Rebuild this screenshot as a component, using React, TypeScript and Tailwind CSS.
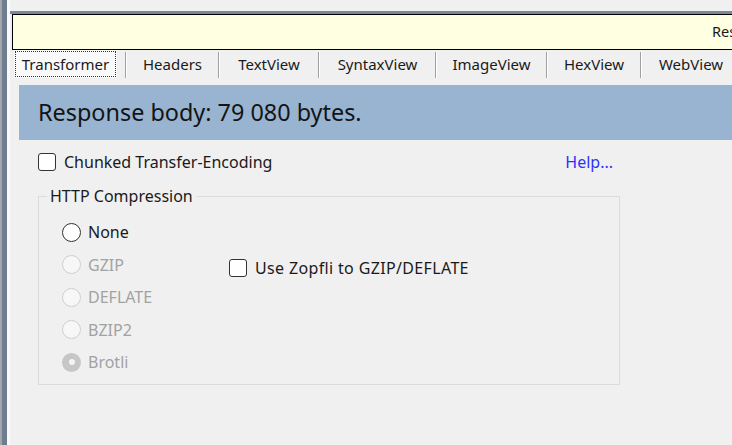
const TABS = [
  { label: 'Headers', width: 'w-[93px]' },
  { label: 'TextView', width: 'w-[100px]' },
  { label: 'SyntaxView', width: 'w-[117px]' },
  { label: 'ImageView', width: 'w-[111px]' },
  { label: 'HexView', width: 'w-[94px]' },
  { label: 'WebView', width: 'w-[100px]' },
]

const COMPRESSION = [
  { label: 'None', enabled: true, checked: false },
  { label: 'GZIP', enabled: false, checked: false },
  { label: 'DEFLATE', enabled: false, checked: false },
  { label: 'BZIP2', enabled: false, checked: false },
  { label: 'Brotli', enabled: false, checked: true },
]

export default function App() {
  return (
    <div className="flex h-[445px] w-[732px] overflow-hidden bg-[#f0f0f0] font-['Noto_Sans',sans-serif] text-[#1a1a1a]">
      <div className="flex w-[10px] shrink-0">
        <div className="w-[2px] bg-[#a3a7ab]" />
        <div className="w-[5px] bg-[#6e7e90]" />
        <div className="w-[3px] bg-[#fafafa]" />
      </div>

      <div className="flex min-w-0 flex-1 flex-col">
        <div className="h-[11px]" />
        <div className="h-[3px] bg-[#7b8897]" />
        <div className="ml-[2px] flex h-[36px] items-center overflow-hidden whitespace-nowrap border-y border-l border-black bg-[#ffffe1] pl-[699px] text-[14.5px]">
          Response body is encoded. Click to decode.
        </div>

        <Tabs />

        <div className="ml-[9px] mt-[7px] flex h-[55px] items-center bg-[#99b4d1] pl-[19px] text-[23.4px] text-[#141414]">
          Response body: 79 080 bytes.
        </div>

        <div className="ml-[9px] pl-[19px] text-[16px]">
          <div className="mt-[13px] flex h-[18px] w-[575px] items-center">
            <CheckBox />
            <span className="ml-[8px]">Chunked Transfer-Encoding</span>
            <a className="ml-auto text-[#2f2fff]">Help...</a>
          </div>

          <fieldset className="mt-[15px] h-[199px] w-[582px] border border-[#dcdcdc]">
            <legend className="ml-[8px] px-[3px] leading-[20px]">HTTP Compression</legend>
            <div className="flex">
              <div className="flex w-[190px] shrink-0 flex-col pl-[23px] pt-[10px]">
                {COMPRESSION.map((item) => (
                  <div key={item.label} className="flex h-[32.5px] items-center">
                    <Radio enabled={item.enabled} checked={item.checked} />
                    <span className={`ml-[7px] ${item.enabled ? '' : 'text-[#a2a2a2]'}`}>{item.label}</span>
                  </div>
                ))}
              </div>
              <div className="mt-[53px] flex h-[18px] items-center">
                <CheckBox />
                <span className="ml-[8px] tracking-[0.35px]">Use Zopfli to GZIP/DEFLATE</span>
              </div>
            </div>
          </fieldset>
        </div>
      </div>
    </div>
  )
}

function Tabs() {
  return (
    <div className="ml-[4px] flex h-[28px] items-stretch whitespace-nowrap text-[15px]">
      <div className="flex w-[103px] shrink-0 items-center justify-center bg-[#f9f9f9] p-[1px]">
        <div className="flex h-full w-full items-center justify-center border border-dotted border-[#333]">
          Transformer
        </div>
      </div>
      <div className="w-[8px] shrink-0" />
      {TABS.map((tab) => (
        <div key={tab.label} className={`flex ${tab.width} shrink-0 items-center justify-center`}>
          <span className="h-[26px] w-[2px] shrink-0 self-end border-l border-[#a0a0a0] border-r border-r-white" />
          <span className="flex-1 text-center">{tab.label}</span>
        </div>
      ))}
    </div>
  )
}

function CheckBox() {
  return <span className="inline-block h-[18px] w-[18px] shrink-0 rounded-[3px] border border-[#333] bg-white" />
}

function Radio({ enabled, checked }: { enabled: boolean; checked: boolean }) {
  if (checked) {
    return (
      <span className="flex h-[19px] w-[19px] shrink-0 items-center justify-center rounded-full bg-[#c6c6c6]">
        <span className="h-[6px] w-[6px] rounded-full bg-[#f4f4f4]" />
      </span>
    )
  }

  return (
    <span
      className={`inline-block h-[19px] w-[19px] shrink-0 rounded-full border ${
        enabled ? 'border-[#333] bg-white' : 'border-[#cfcfcf] bg-[#f7f7f7]'
      }`}
    />
  )
}
